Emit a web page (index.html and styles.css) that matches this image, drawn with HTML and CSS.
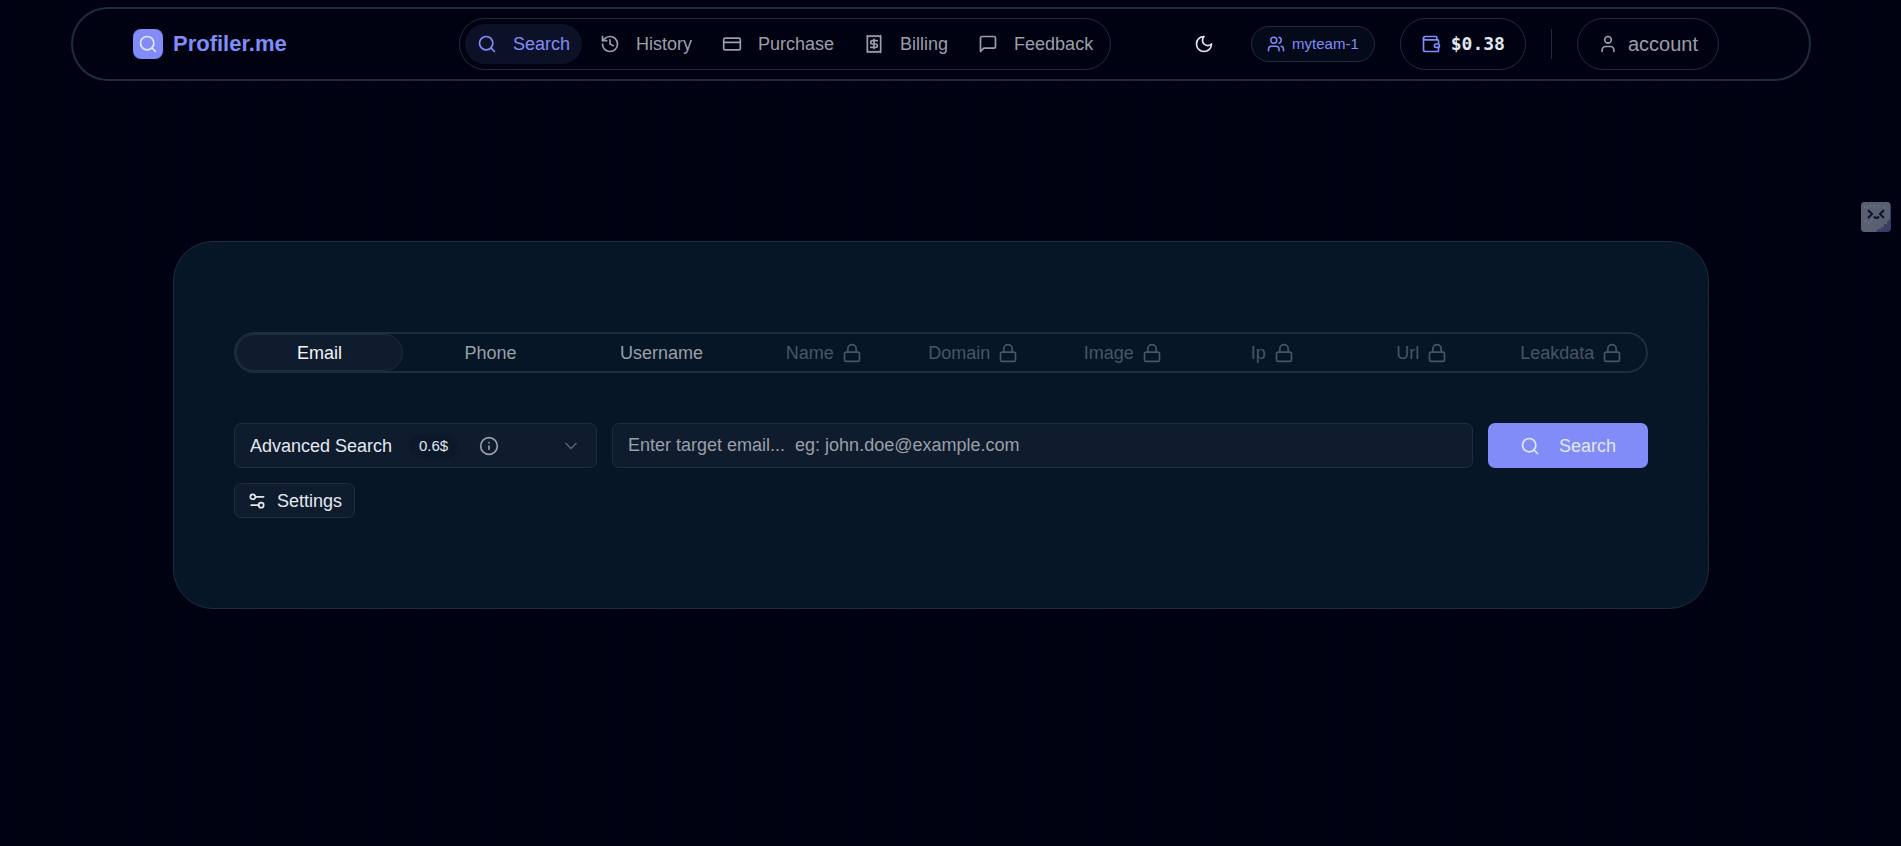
FILE: index.html
```html
<!DOCTYPE html>
<html lang="en">
<head>
<meta charset="utf-8">
<title>Profiler.me</title>
<link rel="stylesheet" href="styles.css">
</head>
<body>
<svg class="sprite" aria-hidden="true">
  <symbol id="search" viewBox="0 0 24 24"><circle cx="11" cy="11" r="8"/><path d="m21 21-4.3-4.3"/></symbol>
  <symbol id="history" viewBox="0 0 24 24"><path d="M3 12a9 9 0 1 0 9-9 9.75 9.75 0 0 0-6.74 2.74L3 8"/><path d="M3 3v5h5"/><path d="M12 7v5l4 2"/></symbol>
  <symbol id="card" viewBox="0 0 24 24"><rect x="2" y="5" width="20" height="14" rx="2"/><path d="M2 10h20"/></symbol>
  <symbol id="receipt" viewBox="0 0 24 24"><path d="M4 2v20l2-1 2 1 2-1 2 1 2-1 2 1 2-1 2 1V2l-2 1-2-1-2 1-2-1-2 1-2-1-2 1Z"/><path d="M16 8h-6a2 2 0 1 0 0 4h4a2 2 0 1 1 0 4H8"/><path d="M12 17.500V6.500"/></symbol>
  <symbol id="message" viewBox="0 0 24 24"><path d="M21 15a2 2 0 0 1-2 2H7l-4 4V5a2 2 0 0 1 2-2h14a2 2 0 0 1 2 2z"/></symbol>
  <symbol id="moon" viewBox="0 0 24 24"><path d="M12 3a6 6 0 0 0 9 9 9 9 0 1 1-9-9Z"/></symbol>
  <symbol id="users" viewBox="0 0 24 24"><path d="M16 21v-2a4 4 0 0 0-4-4H6a4 4 0 0 0-4 4v2"/><circle cx="9" cy="7" r="4"/><path d="M22 21v-2a4 4 0 0 0-3-3.870"/><path d="M16 3.130a4 4 0 0 1 0 7.750"/></symbol>
  <symbol id="wallet" viewBox="0 0 24 24"><path d="M19 7V4a1 1 0 0 0-1-1H5a2 2 0 0 0 0 4h15a1 1 0 0 1 1 1v4h-3a2 2 0 0 0 0 4h3a1 1 0 0 0 1-1v-2a1 1 0 0 0-1-1"/><path d="M3 5v14a2 2 0 0 0 2 2h15a1 1 0 0 0 1-1v-4"/></symbol>
  <symbol id="user" viewBox="0 0 24 24"><path d="M19 21v-2a4 4 0 0 0-4-4H9a4 4 0 0 0-4 4v2"/><circle cx="12" cy="7" r="4"/></symbol>
  <symbol id="lock" viewBox="0 0 24 24"><rect x="3" y="11" width="18" height="11" rx="2"/><path d="M7 11V7a5 5 0 0 1 10 0v4"/></symbol>
  <symbol id="info" viewBox="0 0 24 24"><circle cx="12" cy="12" r="10"/><path d="M12 16v-4M12 8h.01"/></symbol>
  <symbol id="chevron" viewBox="0 0 24 24"><path d="m6 9 6 6 6-6"/></symbol>
  <symbol id="settings" viewBox="0 0 24 24"><path d="M20 7h-9M14 17H5"/><circle cx="17" cy="17" r="3"/><circle cx="7" cy="7" r="3"/></symbol>
</svg>

<header class="topbar">
  <a class="brand" href="#"><span class="brand-mark"><svg class="icon"><use href="#search"/></svg></span>Profiler.me</a>
  <div class="nav-wrap">
    <nav class="nav" aria-label="Main">
      <a class="nav-item active" href="#"><svg class="icon"><use href="#search"/></svg>Search</a>
      <a class="nav-item" href="#"><svg class="icon"><use href="#history"/></svg>History</a>
      <a class="nav-item" href="#"><svg class="icon"><use href="#card"/></svg>Purchase</a>
      <a class="nav-item" href="#"><svg class="icon"><use href="#receipt"/></svg>Billing</a>
      <a class="nav-item" href="#"><svg class="icon"><use href="#message"/></svg>Feedback</a>
    </nav>
  </div>
  <div class="tools">
    <button class="theme" type="button" aria-label="Toggle theme"><svg class="icon"><use href="#moon"/></svg></button>
    <button class="team" type="button"><svg class="icon icon-small"><use href="#users"/></svg>myteam-1</button>
    <button class="wallet" type="button"><svg class="icon"><use href="#wallet"/></svg><span>$0.38</span></button>
    <span class="divider"></span>
    <button class="account" type="button"><svg class="icon"><use href="#user"/></svg>account</button>
  </div>
</header>

<main class="panel">
  <div class="tabs" role="tablist">
    <button class="tab selected" role="tab" aria-selected="true" type="button">Email</button>
    <button class="tab" role="tab" type="button">Phone</button>
    <button class="tab" role="tab" type="button">Username</button>
    <button class="tab locked" role="tab" type="button" disabled>Name<svg class="icon"><use href="#lock"/></svg></button>
    <button class="tab locked" role="tab" type="button" disabled>Domain<svg class="icon"><use href="#lock"/></svg></button>
    <button class="tab locked" role="tab" type="button" disabled>Image<svg class="icon"><use href="#lock"/></svg></button>
    <button class="tab locked" role="tab" type="button" disabled>Ip<svg class="icon"><use href="#lock"/></svg></button>
    <button class="tab locked" role="tab" type="button" disabled>Url<svg class="icon"><use href="#lock"/></svg></button>
    <button class="tab locked" role="tab" type="button" disabled>Leakdata<svg class="icon"><use href="#lock"/></svg></button>
  </div>
  <form class="query">
    <div class="mode">
      <select class="field" aria-label="Search type"><option>Advanced Search</option></select>
      <div class="mode-extras">
        <span class="price">0.6$</span>
        <svg class="icon info"><use href="#info"/></svg>
        <svg class="icon chevron"><use href="#chevron"/></svg>
      </div>
    </div>
    <input class="field target" type="text" aria-label="Target email" placeholder="Enter target email...&nbsp; eg: john.doe@example.com">
    <button class="submit" type="submit"><svg class="icon"><use href="#search"/></svg>Search</button>
  </form>
  <button class="settings" type="button"><svg class="icon"><use href="#settings"/></svg>Settings</button>
</main>

<button class="helper" type="button" aria-label="Assistant">
  <svg viewBox="0 0 30 30" width="30" height="30">
    <rect width="30" height="30" rx="4" fill="#333f66"/>
    <path d="M4 0h22a4 4 0 0 1 3 2v15l-3 3v2h-3v3h-3v2h-3l-2 3H4a4 4 0 0 1-4-4V4a4 4 0 0 1 4-4Z" fill="#586071"/>
    <path d="M7 8l4 4-4 4M23 8l-4 4 4 4" fill="none" stroke="#0b1533" stroke-width="2"/>
    <path d="M13 14.500q2.500 3 5 0" fill="none" stroke="#0b1533" stroke-width="2"/>
    <path d="M3 5h1M6 5h1M9 4h1M13 4h1M17 4h1M23 5h1M4 19h1M7 21h1M10 19h1" stroke="#8b909c"/>
    <path d="M26 22h1M25 26h1M21 27h1M28 18h1" stroke="#7a4a45"/>
  </svg>
</button>
</body>
</html>
```

FILE: styles.css
```css
:root {
  --bg: #000211;
  --line: #1e2d3d;
  --panel: #061626;
  --field: #0f1c2e;
  --primary: #818cf8;
  --muted: #9b9fa8;
  --text: #e2e8f0;
}

* { box-sizing: border-box; }

body {
  margin: 0;
  min-height: 100vh;
  padding: 7px 90px 0 71px;
  background-color: var(--bg);
  background-image:
    linear-gradient(to right, #010414 1px, transparent 1px),
    linear-gradient(to bottom, #010414 1px, transparent 1px);
  background-size: 30px 30px;
  background-position: 11px 27px;
  color: var(--text);
  font-family: "Liberation Sans", Arial, sans-serif;
  font-size: 18px;
  line-height: 24px;
}

.sprite { display: none; }

a { color: inherit; text-decoration: none; }

button, input, select { font: inherit; color: inherit; }

button { margin: 0; padding: 0; border: 0; background: none; }

.icon {
  flex: none;
  width: 20px;
  height: 20px;
  fill: none;
  stroke: currentColor;
  stroke-width: 2;
  stroke-linecap: round;
  stroke-linejoin: round;
}

.icon-small { width: 18px; height: 18px; }

.topbar {
  display: flex;
  align-items: center;
  padding: 9px 90px 9px 60px;
  border: 2px solid var(--line);
  border-radius: 37px;
  background: var(--bg);
}

.brand {
  flex: 17 0 auto;
  display: flex;
  align-items: center;
  gap: 10px;
  color: var(--primary);
  font-size: 22px;
  font-weight: 700;
}

.brand-mark {
  display: grid;
  place-items: center;
  width: 30px;
  height: 30px;
  border-radius: 8px;
  background: var(--primary);
  color: var(--text);
}

.nav-wrap { flex: 7 0 auto; display: flex; }

.nav {
  display: flex;
  gap: 6px;
  padding: 5px;
  border: 1px solid var(--line);
  border-radius: 26px;
}

.nav-item {
  display: flex;
  align-items: center;
  gap: 16px;
  height: 40px;
  padding: 0 12px;
  border-radius: 20px;
  color: var(--muted);
}

.nav-item.active { background: #0d1127; color: var(--primary); }

.tools { display: flex; align-items: center; gap: 25px; }

.tools button {
  display: flex;
  align-items: center;
  justify-content: center;
  border-radius: 26px;
}

.tools .theme { width: 44px; height: 44px; }

.tools .team {
  gap: 7px;
  height: 36px;
  padding: 0 15px;
  border: 1px solid var(--line);
  background: #040a1a;
  color: var(--primary);
  font-size: 15px;
}

.tools .wallet {
  gap: 10px;
  height: 52px;
  padding: 0 20px;
  border: 1px solid var(--line);
  font-family: "DejaVu Sans Mono", monospace;
  font-size: 18px;
  font-weight: 700;
}

.wallet .icon { color: var(--primary); }

.divider { width: 1px; height: 30px; background: var(--line); }

.tools .account {
  gap: 10px;
  height: 52px;
  padding: 0 20px;
  border: 1px solid var(--line);
  color: var(--muted);
  font-size: 20px;
}

.panel {
  max-width: 1536px;
  margin: 160px auto 0;
  padding: 90px 60px;
  border: 1px solid var(--line);
  border-radius: 40px;
  background: var(--panel);
}

.tabs {
  display: grid;
  grid-template-columns: repeat(3, 342fr) repeat(6, 299fr);
  height: 41px;
  margin-bottom: 50px;
  border: 2px solid var(--line);
  border-radius: 21px;
}

.tab {
  display: flex;
  align-items: center;
  justify-content: center;
  gap: 8px;
  color: var(--muted);
}

.tab:not(.locked) { margin-right: 4px; }

.tab.selected {
  border: 1px solid var(--line);
  border-radius: 19px;
  background: var(--field);
  color: #f1f5f9;
}

.tab.locked { color: #4a5367; }

.query {
  display: grid;
  grid-template-columns: 363px 1fr 160px;
  gap: 15px;
  margin-bottom: 15px;
}

.field {
  width: 100%;
  height: 45px;
  padding: 0 15px;
  border: 1px solid var(--line);
  border-radius: 7px;
  background: var(--field);
  appearance: none;
}

.target::placeholder { color: var(--muted); opacity: 1; }

.mode { display: grid; }

.mode > * { grid-area: 1 / 1; }

.mode-extras {
  display: flex;
  align-items: center;
  padding: 0 16px 0 175px;
  pointer-events: none;
}

.price {
  padding: 1px 10px;
  border-radius: 13px;
  background: #0c192a;
  font-size: 15px;
}

.info { margin-left: 21px; color: var(--muted); }

.chevron { margin-left: auto; color: #56606f; }

.submit {
  display: flex;
  align-items: center;
  justify-content: center;
  gap: 19px;
  border-radius: 7px;
  background: var(--primary);
}

.settings {
  display: flex;
  align-items: center;
  gap: 10px;
  height: 35px;
  padding: 0 12px;
  border: 1px solid var(--line);
  border-radius: 7px;
  background: var(--field);
}

.helper { position: fixed; top: 202px; right: 10px; height: 30px; }

.helper svg { display: block; }
```
